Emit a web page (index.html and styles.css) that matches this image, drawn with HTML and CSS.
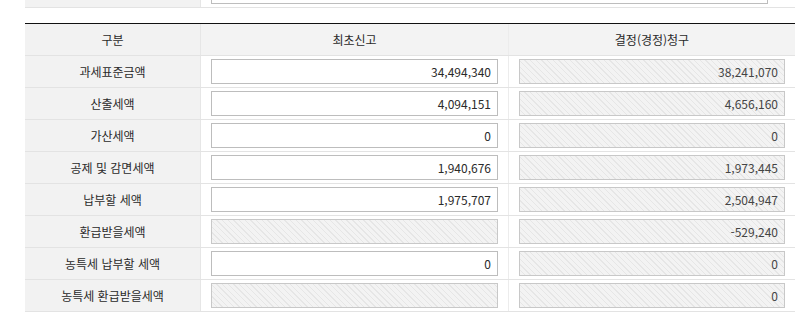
FILE: index.html
```html
<!DOCTYPE html>
<html lang="ko">
<head>
<meta charset="utf-8">
<link rel="stylesheet" href="styles.css">
</head>
<body>
<div class="wrap">
  <div class="prev">
    <div class="row prev-row">
      <div class="label left">* 세무서</div>
      <div class="cell wide"><div class="field"></div></div>
    </div>
  </div>
  <div class="grid">
    <div class="row head">
      <div class="label">구분</div>
      <div class="cell c2">최초신고</div>
      <div class="cell c3">결정(경정)청구</div>
    </div>
    <div class="row"><div class="label">과세표준금액</div><div class="cell c2"><div class="field">34,494,340</div></div><div class="cell c3"><div class="field dis">38,241,070</div></div></div>
    <div class="row"><div class="label">산출세액</div><div class="cell c2"><div class="field">4,094,151</div></div><div class="cell c3"><div class="field dis">4,656,160</div></div></div>
    <div class="row"><div class="label">가산세액</div><div class="cell c2"><div class="field">0</div></div><div class="cell c3"><div class="field dis">0</div></div></div>
    <div class="row"><div class="label">공제 및 감면세액</div><div class="cell c2"><div class="field">1,940,676</div></div><div class="cell c3"><div class="field dis">1,973,445</div></div></div>
    <div class="row"><div class="label">납부할 세액</div><div class="cell c2"><div class="field">1,975,707</div></div><div class="cell c3"><div class="field dis">2,504,947</div></div></div>
    <div class="row"><div class="label">환급받을세액</div><div class="cell c2"><div class="field dis"></div></div><div class="cell c3"><div class="field dis">-529,240</div></div></div>
    <div class="row"><div class="label">농특세 납부할 세액</div><div class="cell c2"><div class="field">0</div></div><div class="cell c3"><div class="field dis">0</div></div></div>
    <div class="row"><div class="label">농특세 환급받을세액</div><div class="cell c2"><div class="field dis"></div></div><div class="cell c3"><div class="field dis">0</div></div></div>
  </div>
</div>
</body>
</html>
```
FILE: styles.css
```css
html, body {
  margin: 0;
  padding: 0;
  background: #fff;
}
body {
  font-family: "Noto Sans CJK KR", "Noto Sans", sans-serif;
  font-size: 12px;
  color: #2a2a2a;
  overflow: hidden;
}
.wrap {
  padding-left: 25px;
  width: 770px;
}
.prev {
  margin-top: -24px;
  margin-bottom: 15px;
}
.row {
  display: grid;
  grid-template-columns: 176px 308px 286px;
  height: 32px;
  border-bottom: 1px solid #e3e3e3;
  box-sizing: border-box;
}
.prev-row {
  grid-template-columns: 176px 594px;
}
.grid {
  border-top: 1px solid #111;
  box-shadow: inset 0 1px 0 #555;
}
.label {
  background: #f2f2f2;
  display: flex;
  align-items: center;
  justify-content: center;
  border-right: 1px solid #e6e6e6;
}
.label.left {
  justify-content: flex-start;
  padding-left: 22px;
}
.cell {
  display: flex;
  align-items: center;
  padding: 0 10px;
  border-right: 1px solid #ececec;
}
.cell.c3, .cell.wide { border-right: none; }
.cell.wide { padding-right: 27px; }
.head .cell {
  background: #f3f3f3;
  justify-content: center;
}
.field {
  flex: 1;
  height: 25px;
  box-sizing: border-box;
  border: 1px solid #bdbdbd;
  background: #fff;
  display: flex;
  align-items: center;
  justify-content: flex-end;
  padding-right: 6px;
  color: #2a2a2a;
}
.field.dis {
  border-color: #c8c8c8;
  background: repeating-linear-gradient(45deg, #f3f3f3 0, #f3f3f3 3px, #e6e6e6 3px, #e6e6e6 4px);
  color: #444;
}
```
